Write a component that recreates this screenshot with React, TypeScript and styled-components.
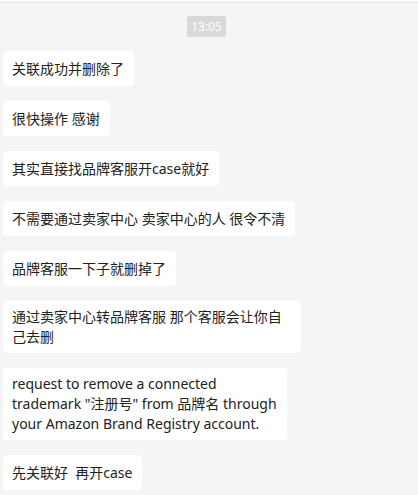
import styled, { createGlobalStyle } from 'styled-components';

const GlobalStyle = createGlobalStyle`
  html, body {
    margin: 0;
    padding: 0;
    background: #f5f5f5;
  }
  body {
    font-family: 'Noto Sans', 'Noto Sans CJK SC', sans-serif;
  }
`;

// --- Styled components ---
const Window = styled.div`
  width: 418px;
  height: 495px;
  overflow: hidden;
  background: #f5f5f5;
  display: flex;
  flex-direction: column;
`;

const TopEdge = styled.div`
  height: 2px;
  background: #fbfbfb;
  border-bottom: 1px solid #e4e4e4;
  flex-shrink: 0;
`;

const Messages = styled.div`
  display: flex;
  flex-direction: column;
  align-items: flex-start;
  gap: 15px;
  padding: 15px 0 0 3px;
`;

const TimeRow = styled.div`
  align-self: stretch;
  display: flex;
  justify-content: center;
  padding-right: 8px;
  margin-top: -2px;
  margin-bottom: -1px;
`;

const Time = styled.span`
  background: #d9d9d9;
  color: #ffffff;
  font-size: 12px;
  line-height: 21px;
  padding: 0 4px;
  border-radius: 2px;
`;

const Bubble = styled.div`
  box-sizing: border-box;
  min-height: 35px;
  max-width: 298px;
  display: flex;
  align-items: center;
  padding: 6px 10px 6px 9px;
  background: #ffffff;
  border-radius: 4px;
  color: #222;
  font-size: 14px;
  line-height: 20px;
  white-space: pre-wrap;
  word-break: break-word;
`;

const messages = [
  '关联成功并删除了',
  '很快操作 感谢',
  '其实直接找品牌客服开case就好',
  '不需要通过卖家中心 卖家中心的人 很令不清',
  '品牌客服一下子就删掉了',
  '通过卖家中心转品牌客服 那个客服会让你自己去删',
  'request to remove a connected\ntrademark "注册号" from 品牌名 through\nyour Amazon Brand Registry account.',
  '先关联好  再开case',
];

export default function App() {
  return (
    <>
      <GlobalStyle />
      <Window>
        <TopEdge />
        <Messages>
          <TimeRow>
            <Time>13:05</Time>
          </TimeRow>
          {messages.map((text, i) => (
            <Bubble key={i}>{text}</Bubble>
          ))}
        </Messages>
      </Window>
    </>
  );
}
